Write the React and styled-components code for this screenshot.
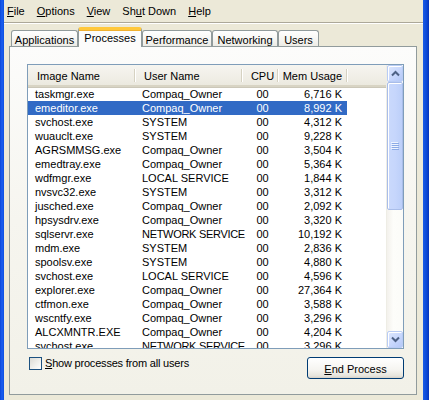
import React from "react";
import styled, { createGlobalStyle, css } from "styled-components";

const Global = createGlobalStyle`
  html, body { margin: 0; padding: 0; background: #ece9d8; }
  body { font-family: "Liberation Sans", Arial, sans-serif; font-size: 11px; color: #000; }
  * { box-sizing: border-box; }
`;

const Window = styled.div`
  display: flex;
  width: 429px;
  height: 400px;
  overflow: hidden;
  background: #ece9d8;
`;

const FrameLeft = styled.div`
  width: 4px;
  flex: none;
  background: linear-gradient(90deg, #0a46d8 0%, #1b5ef0 50%, #0b4fe0 100%);
`;

const FrameRight = styled.div`
  width: 6px;
  flex: none;
  background: linear-gradient(90deg, #1a5ce6 0%, #0b48d6 60%, #0634b8 100%);
`;

const Client = styled.div`
  flex: 1;
  display: flex;
  flex-direction: column;
  min-width: 0;
`;

const MenuBar = styled.div`
  display: flex;
  align-items: center;
  height: 23px;
  border-bottom: 1px solid #aca899;
  box-shadow: 0 1px 0 #ffffff;
  padding-bottom: 1px;
`;

const MenuItem = styled.div`
  padding: 0 6px;
  line-height: 14px;
  &:first-child { padding-left: 3px; }
`;

const U = styled.span`
  text-decoration: underline;
  text-underline-offset: 1px;
`;

const Body = styled.div`
  flex: 1;
  display: flex;
  flex-direction: column;
  padding: 4px 6px 5px 5px;
`;

const TabStrip = styled.div`
  display: flex;
  align-items: flex-end;
  height: 20px;
  padding-left: 2px;
  margin-bottom: -1px;
  position: relative;
  z-index: 1;
`;

const Tab = styled.div`
  width: ${(p) => p.$w}px;
  height: 16px;
  margin-bottom: 1px;
  display: flex;
  align-items: center;
  justify-content: center;
  padding-top: 2px;
  border: 1px solid #919b9c;
  border-bottom: none;
  border-radius: 3px 3px 0 0;
  background: linear-gradient(#ffffff 0%, #f7f7f4 50%, #ecebe5 100%);
  white-space: nowrap;
  ${(p) =>
    p.$active &&
    css`
      height: 20px;
      margin-bottom: 0;
      padding-top: 0;
      padding-bottom: 2px;
      background: #fcfcfb;
      border-top: 3px solid #ffc83c;
      box-shadow: inset 0 1px 0 #f0b030;
      border-radius: 3px 3px 0 0;
    `}
`;

const Panel = styled.div`
  flex: 1;
  display: flex;
  flex-direction: column;
  border: 1px solid #919b9c;
  background: linear-gradient(#fcfcfb 0%, #f6f5ef 50%, #f2f1e8 100%);
  padding: 17px 12px 15px 17px;
`;

const ListView = styled.div`
  height: 285px;
  display: flex;
  border: 1px solid #7f9db9;
  background: #ffffff;
  overflow: hidden;
`;

const ListMain = styled.div`
  flex: 1;
  display: flex;
  flex-direction: column;
  overflow: hidden;
`;

const HeaderRow = styled.div`
  display: flex;
  height: 22px;
  flex: none;
  padding-top: 2px;
  background: linear-gradient(#f6f5f0 0%, #efede5 70%, #ebe9df 100%);
  border-bottom: 2px solid #d8d4c4;
  box-shadow: 0 1px 0 #cbc7b8;
`;

const HeadCell = styled.div`
  width: ${(p) => p.$w}px;
  flex: none;
  display: flex;
  align-items: center;
  position: relative;
  padding: 0 6px 0 9px;
  white-space: nowrap;
  justify-content: ${(p) => (p.$align === "right" ? "flex-end" : p.$align === "center" ? "center" : "flex-start")};
  ${(p) => p.$align === "right" && css`padding: 0 5px 0 0;`}
  ${(p) => p.$align === "center" && css`padding: 0 0 0 5px;`}
  &::after {
    content: "";
    position: absolute;
    right: 0;
    top: 2px;
    bottom: 3px;
    width: 1px;
    background: #d6d2c2;
    box-shadow: 1px 0 0 #ffffff;
  }
`;

const HeadFill = styled.div`
  flex: 1;
`;

const Rows = styled.div`
  display: flex;
  flex-direction: column;
`;

const Row = styled.div`
  display: flex;
  height: 14px;
  flex: none;
  align-items: center;
  width: 319px;
  background: ${(p) => (p.$sel ? "#316ac5" : "transparent")};
  color: ${(p) => (p.$sel ? "#ffffff" : "#000000")};
`;

const Cell = styled.div`
  width: ${(p) => p.$w}px;
  flex: none;
  white-space: nowrap;
  overflow: visible;
  padding-left: 7px;
  text-align: left;
  ${(p) => p.$tight && css`letter-spacing: -0.3px;`}
  ${(p) => p.$align === "right" && css`padding: 0 5px 0 0; text-align: right;`}
  ${(p) => p.$align === "center" && css`padding: 0 0 0 5px; text-align: center;`}
`;

const ScrollBar = styled.div`
  width: 17px;
  flex: none;
  display: flex;
  flex-direction: column;
  background: linear-gradient(90deg, #f3f1ec 0%, #fdfdfa 40%, #fbfbf8 100%);
  border-left: 1px solid #eeede5;
`;

const ScrollBtn = styled.div`
  height: 17px;
  flex: none;
  display: flex;
  align-items: center;
  justify-content: center;
  border: 1px solid #b9ccf5;
  border-radius: 2px;
  background: linear-gradient(135deg, #dde7fe 0%, #c5d5fc 60%, #b4c8f6 100%);
  box-shadow: inset 1px 1px 0 #ffffff;
`;

const Thumb = styled.div`
  height: 128px;
  flex: none;
  display: flex;
  align-items: center;
  justify-content: center;
  border: 1px solid #a9bde9;
  border-radius: 2px;
  background: linear-gradient(90deg, #cad9fc 0%, #c6d6fc 50%, #bccff9 100%);
  box-shadow: inset 1px 1px 0 #ffffff;
`;

const Track = styled.div`
  flex: 1;
`;

const Footer = styled.div`
  display: flex;
  justify-content: space-between;
  align-items: flex-start;
  margin-top: 8px;
`;

const CheckLabel = styled.label`
  display: flex;
  align-items: center;
  gap: 3px;
  margin-left: 2px;
  height: 13px;
  line-height: 13px;
  letter-spacing: -0.2px;
`;

const CheckBox = styled.span`
  width: 13px;
  height: 13px;
  flex: none;
  border: 1px solid #1c5180;
  background: linear-gradient(135deg, #dcdbd5 0%, #f2f2ee 60%, #ffffff 100%);
`;

const Button = styled.button`
  width: 97px;
  height: 22px;
  border: 1px solid #003c74;
  border-radius: 3px;
  background: linear-gradient(#ffffff 0%, #f5f4f0 60%, #e6e4dc 90%, #d6d0c5 100%);
  font-family: "Liberation Sans", Arial, sans-serif;
  font-size: 11px;
  color: #000;
  padding: 0;
  padding-top: 1px;
`;

const Arrow = ({ up }) => (
  <svg width="9" height="7" viewBox="0 0 9 7">
    <path
      d={up ? "M1 5.5 L4.5 2 L8 5.5" : "M1 1.5 L4.5 5 L8 1.5"}
      fill="none"
      stroke="#4d6185"
      strokeWidth="2"
    />
  </svg>
);

const Grip = () => (
  <svg width="8" height="8" viewBox="0 0 8 8">
    {[0, 2, 4, 6].map((y) => (
      <g key={y}>
        <rect x="0" y={y} width="7" height="1" fill="#eef3fe" />
        <rect x="1" y={y + 1} width="7" height="1" fill="#8caae6" />
      </g>
    ))}
  </svg>
);

const cols = [
  { key: "name", label: "Image Name", w: 107 },
  { key: "user", label: "User Name", w: 107 },
  { key: "cpu", label: "CPU", w: 36, align: "center" },
  { key: "mem", label: "Mem Usage", w: 69, align: "right" },
];

const data = [
  ["taskmgr.exe", "Compaq_Owner", "00", "6,716 K"],
  ["emeditor.exe", "Compaq_Owner", "00", "8,992 K"],
  ["svchost.exe", "SYSTEM", "00", "4,312 K"],
  ["wuauclt.exe", "SYSTEM", "00", "9,228 K"],
  ["AGRSMMSG.exe", "Compaq_Owner", "00", "3,504 K"],
  ["emedtray.exe", "Compaq_Owner", "00", "5,364 K"],
  ["wdfmgr.exe", "LOCAL SERVICE", "00", "1,844 K"],
  ["nvsvc32.exe", "SYSTEM", "00", "3,312 K"],
  ["jusched.exe", "Compaq_Owner", "00", "2,092 K"],
  ["hpsysdrv.exe", "Compaq_Owner", "00", "3,320 K"],
  ["sqlservr.exe", "NETWORK SERVICE", "00", "10,192 K"],
  ["mdm.exe", "SYSTEM", "00", "2,836 K"],
  ["spoolsv.exe", "SYSTEM", "00", "4,880 K"],
  ["svchost.exe", "LOCAL SERVICE", "00", "4,596 K"],
  ["explorer.exe", "Compaq_Owner", "00", "27,364 K"],
  ["ctfmon.exe", "Compaq_Owner", "00", "3,588 K"],
  ["wscntfy.exe", "Compaq_Owner", "00", "3,296 K"],
  ["ALCXMNTR.EXE", "Compaq_Owner", "00", "4,204 K"],
  ["svchost.exe", "NETWORK SERVICE", "00", "3,296 K"],
];

const tabs = [
  { label: "Applications", w: 67 },
  { label: "Processes", w: 64, active: true },
  { label: "Performance", w: 70 },
  { label: "Networking", w: 66 },
  { label: "Users", w: 41 },
];

export default function App() {
  return (
    <>
      <Global />
      <Window>
        <FrameLeft />
        <Client>
          <MenuBar>
            <MenuItem><U>F</U>ile</MenuItem>
            <MenuItem><U>O</U>ptions</MenuItem>
            <MenuItem><U>V</U>iew</MenuItem>
            <MenuItem>Sh<U>u</U>t Down</MenuItem>
            <MenuItem><U>H</U>elp</MenuItem>
          </MenuBar>
          <Body>
            <TabStrip>
              {tabs.map((t) => (
                <Tab key={t.label} $w={t.w} $active={t.active}>
                  {t.label}
                </Tab>
              ))}
            </TabStrip>
            <Panel>
              <ListView>
                <ListMain>
                  <HeaderRow>
                    {cols.map((c) => (
                      <HeadCell key={c.key} $w={c.w} $align={c.align}>
                        {c.label}
                      </HeadCell>
                    ))}
                    <HeadFill />
                  </HeaderRow>
                  <Rows>
                    {data.map((r, i) => (
                      <Row key={i} $sel={i === 1}>
                        {cols.map((c, j) => (
                          <Cell
                            key={c.key}
                            $w={c.w}
                            $align={c.align}
                            $tight={r[j].length > 13}
                          >
                            {r[j]}
                          </Cell>
                        ))}
                      </Row>
                    ))}
                  </Rows>
                </ListMain>
                <ScrollBar>
                  <ScrollBtn><Arrow up /></ScrollBtn>
                  <Thumb><Grip /></Thumb>
                  <Track />
                  <ScrollBtn><Arrow /></ScrollBtn>
                </ScrollBar>
              </ListView>
              <Footer>
                <CheckLabel>
                  <CheckBox />
                  <span><U>S</U>how processes from all users</span>
                </CheckLabel>
                <Button><U>E</U>nd Process</Button>
              </Footer>
            </Panel>
          </Body>
        </Client>
        <FrameRight />
      </Window>
    </>
  );
}
